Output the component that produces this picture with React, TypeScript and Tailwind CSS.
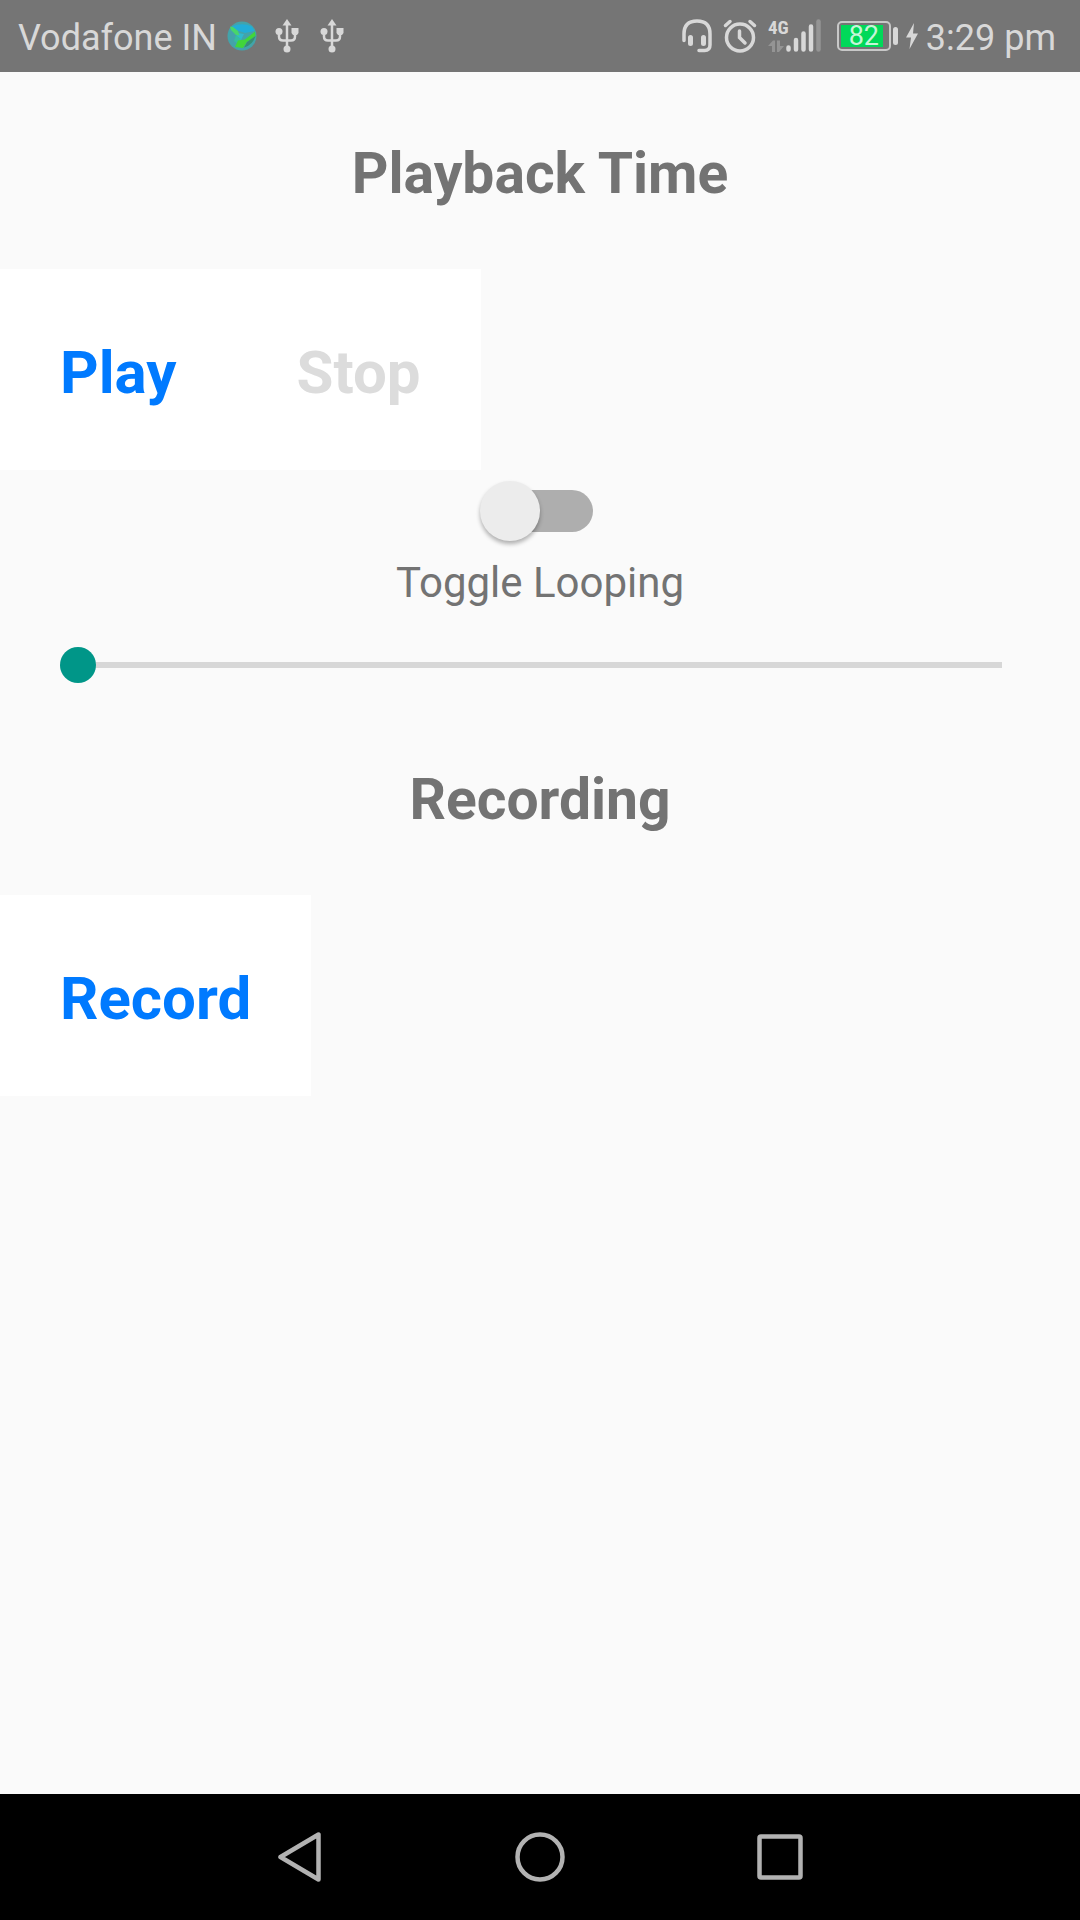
import { useState } from "react";

function GlobeIcon() {
  return (
    <svg viewBox="0 0 30 30" className="size-[30px]" aria-hidden="true">
      <circle cx="15" cy="15" r="14.5" fill="#43a3aa" />
      <path d="M5 5.500Q15 1 25 5.500L27.500 10L18 12L9 9Z" fill="#22add8" />
      <path d="M10 12L17 13L14 19L9 20Z" fill="#2fb9cf" />
      <path d="M3 5.500L6 6L11 10L12.500 14.500L9 14L4 9Z" fill="#48d66a" />
      <path d="M9 14L14 18L10 22L7 20Z" fill="#35bda0" />
      <path d="M11 19.500L18 18.500L28 10.500L28.500 15L20 21L16 27L8 26Z" fill="#41d63a" />
      <path d="M28.500 15L20 21L17 26.500Q26 24 28.500 15Z" fill="#388f74" />
    </svg>
  );
}

function UsbIcon() {
  return (
    <svg viewBox="0 0 24 36" className="h-9 w-6" fill="none" stroke="#d8d8d8" strokeWidth="2.500" aria-hidden="true">
      <path d="M12 5V31M4 13V18.500Q4 22.500 8 22.500H16Q20 22.500 20 18.500V13" />
      <path d="M12 1L16.500 7.500H7.500Z" fill="#d8d8d8" stroke="none" />
      <circle cx="4" cy="13.500" r="3.500" fill="#d8d8d8" stroke="none" />
      <path d="M16.500 10H23.500V15L22 17H18L16.500 15Z" fill="#d8d8d8" stroke="none" />
      <circle cx="12" cy="31" r="3.500" fill="#d8d8d8" stroke="none" />
    </svg>
  );
}

function HeadsetIcon() {
  return (
    <svg viewBox="0 0 30 34" className="h-[34px] w-[30px]" fill="none" stroke="#d8d8d8" strokeLinecap="round" aria-hidden="true">
      <path d="M2 21.500V15Q2 2 15 2Q28 2 28 15V26Q28 31.500 22.500 31.500H17" strokeWidth="3.500" />
      <path d="M8.500 18.500V24.500M21.500 18.500V24.500" strokeWidth="5" />
    </svg>
  );
}

function AlarmIcon() {
  return (
    <svg viewBox="0 0 34 34" className="size-[34px]" fill="none" stroke="#d8d8d8" strokeLinecap="round" aria-hidden="true">
      <circle cx="17" cy="18.500" r="13.500" strokeWidth="3.500" />
      <path d="M2.500 6.500L7 2.500M31.500 6.500L27 2.500" strokeWidth="3.500" />
      <path d="M16.500 12V18.500L22 24" strokeWidth="3.500" />
    </svg>
  );
}

function SignalIcon() {
  return (
    <svg viewBox="0 -8 54 50" className="h-[50px] w-[54px]" role="img" aria-label="4G signal">
      <text
        x="0"
        y="15"
        fill="#d8d8d8"
        className="font-['Roboto_Condensed','Liberation_Sans_Narrow',Roboto,sans-serif] text-[19px] font-bold"
      >
        4G
      </text>
      <g fill="#949494">
        <path d="M0 27L5 21.500H7V33H4V27Z" />
        <path d="M9 21.500H12V27H16L11 33H9Z" />
      </g>
      <g stroke="#d8d8d8" strokeWidth="4.500" strokeLinecap="round">
        <path d="M20.500 28.500V30.500M28 21V30.500M35.500 14.500V30.500M43 7.500V30.500" />
        <path d="M50.500 2.500V30.500" stroke="#949494" />
      </g>
    </svg>
  );
}

function Battery() {
  return (
    <div className="flex items-center gap-0.5">
      <div className="h-[30px] w-[54px] rounded-[5px] border-2 border-[#c8c8c8] p-0.5">
        <div className="flex h-full w-[42px] items-center justify-center bg-[#00d959] pl-1 text-[27px] leading-none text-[#c6f5d8]">
          82
        </div>
      </div>
      <div className="h-[18px] w-[5px] rounded-sm bg-[#d8d8d8]" />
    </div>
  );
}

function BoltIcon() {
  return (
    <svg viewBox="0 0 12 28" className="h-7 w-3" fill="#d8d8d8" aria-hidden="true">
      <path d="M8 1L0 15.500H5L3.500 27L12 11.500H7Z" />
    </svg>
  );
}

function StatusBar() {
  return (
    <header className="flex h-[72px] items-center justify-between bg-[#757575] pr-6 pl-[18px] text-[36px] leading-[42px] text-[#d8d8d8]">
      <div className="flex items-center">
        <span className="mt-1 mr-2.5">Vodafone IN</span>
        <GlobeIcon />
        <div className="ml-[18px] flex gap-[21px]">
          <UsbIcon />
          <UsbIcon />
        </div>
      </div>
      <div className="flex items-center">
        <div className="mr-[15px] flex items-center gap-[11px]">
          <HeadsetIcon />
          <AlarmIcon />
          <SignalIcon />
        </div>
        <Battery />
        <div className="ml-2 flex items-center gap-2">
          <BoltIcon />
          <time className="mt-1">3:29 pm</time>
        </div>
      </div>
    </header>
  );
}

function SectionTitle({ children }: { children: string }) {
  return (
    <h2 className="pt-[63px] pb-[57px] text-center text-[57px] leading-[77px] font-bold text-[#737373]">{children}</h2>
  );
}

function TextButton({ children, disabled }: { children: string; disabled?: boolean }) {
  return (
    <button
      type="button"
      disabled={disabled}
      className="bg-white px-[60px] pt-[63px] pb-[57px] text-[60px] leading-[81px] font-bold text-[#007aff] disabled:text-[#dcdcdc]"
    >
      {children}
    </button>
  );
}

function NavigationBar() {
  return (
    <nav className="grid h-[126px] grid-cols-3 bg-black px-45">
      <button type="button" aria-label="Back" className="flex items-center justify-center">
        <svg viewBox="0 0 50 50" className="size-[50px]" fill="none" stroke="#b2b2b2" strokeWidth="4.500" strokeLinejoin="round">
          <path d="M5.500 25L43.500 2.500V47.500Z" />
        </svg>
      </button>
      <button type="button" aria-label="Home" className="flex items-center justify-center">
        <svg viewBox="0 0 50 50" className="size-[50px]" fill="none" stroke="#b2b2b2" strokeWidth="4.500">
          <circle cx="25" cy="25" r="22.500" />
        </svg>
      </button>
      <button type="button" aria-label="Recent apps" className="flex items-center justify-center">
        <svg viewBox="0 0 50 50" className="size-[50px]" fill="none" stroke="#b2b2b2" strokeWidth="4.500" strokeLinejoin="round">
          <rect x="4.500" y="4.500" width="41" height="41" rx="1.500" />
        </svg>
      </button>
    </nav>
  );
}

export default function App() {
  const [looping, setLooping] = useState(false);
  const [position, setPosition] = useState(0);

  return (
    <div className="flex min-h-screen flex-col bg-[#fafafa] font-[Roboto,sans-serif]">
      <StatusBar />
      <main className="flex-1">
        <section>
          <SectionTitle>Playback Time</SectionTitle>
          <div className="flex">
            <TextButton>Play</TextButton>
            <TextButton disabled>Stop</TextButton>
          </div>
          <div className="flex flex-col items-center">
            <input
              id="looping"
              type="checkbox"
              role="switch"
              checked={looping}
              onChange={(e) => setLooping(e.target.checked)}
              className="grid h-[82px] w-[120px] appearance-none items-center before:col-start-1 before:row-start-1 before:mr-[7px] before:ml-[7px] before:h-[42px] before:rounded-full before:bg-[#aeaeae] after:col-start-1 after:row-start-1 after:size-[60px] after:rounded-full after:bg-[#ececec] after:shadow-[0_3px_4px_rgba(0,0,0,0.3)] checked:after:justify-self-end"
            />
            <label htmlFor="looping" className="text-[42px] leading-[61px] text-[#737373]">
              Toggle Looping
            </label>
          </div>
          <div className="pt-[19px] pr-[78px] pl-[60px]">
            <input
              type="range"
              aria-label="Playback position"
              min={0}
              max={100}
              value={position}
              onChange={(e) => setPosition(Number(e.target.value))}
              className="block h-[66px] w-full appearance-none bg-transparent [&::-webkit-slider-runnable-track]:h-1.5 [&::-webkit-slider-runnable-track]:bg-[#d7d7d7] [&::-webkit-slider-thumb]:-mt-[15px] [&::-webkit-slider-thumb]:size-9 [&::-webkit-slider-thumb]:appearance-none [&::-webkit-slider-thumb]:rounded-full [&::-webkit-slider-thumb]:bg-[#009688]"
            />
          </div>
        </section>
        <section>
          <SectionTitle>Recording</SectionTitle>
          <div className="flex">
            <TextButton>Record</TextButton>
          </div>
        </section>
      </main>
      <NavigationBar />
    </div>
  );
}
